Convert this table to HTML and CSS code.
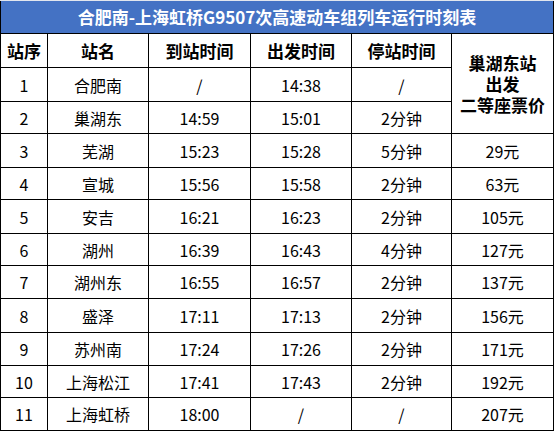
FILE: index.html
```html
<!DOCTYPE html>
<html lang="zh-CN">
<head>
<meta charset="utf-8">
<title>G9507次时刻表</title>
<link rel="stylesheet" href="styles.css">
</head>
<body>
<div class="timetable">
  <div class="cell title">合肥南-上海虹桥G9507次高速动车组列车运行时刻表</div>

  <div class="cell head">站序</div>
  <div class="cell head">站名</div>
  <div class="cell head">到站时间</div>
  <div class="cell head">出发时间</div>
  <div class="cell head">停站时间</div>
  <div class="cell head price-head">巢湖东站<br>出发<br>二等座票价</div>

  <div class="cell">1</div><div class="cell">合肥南</div><div class="cell">/</div><div class="cell">14:38</div><div class="cell">/</div>
  <div class="cell">2</div><div class="cell">巢湖东</div><div class="cell">14:59</div><div class="cell">15:01</div><div class="cell">2分钟</div>
  <div class="cell">3</div><div class="cell">芜湖</div><div class="cell">15:23</div><div class="cell">15:28</div><div class="cell">5分钟</div><div class="cell">29元</div>
  <div class="cell">4</div><div class="cell">宣城</div><div class="cell">15:56</div><div class="cell">15:58</div><div class="cell">2分钟</div><div class="cell">63元</div>
  <div class="cell">5</div><div class="cell">安吉</div><div class="cell">16:21</div><div class="cell">16:23</div><div class="cell">2分钟</div><div class="cell">105元</div>
  <div class="cell">6</div><div class="cell">湖州</div><div class="cell">16:39</div><div class="cell">16:43</div><div class="cell">4分钟</div><div class="cell">127元</div>
  <div class="cell">7</div><div class="cell">湖州东</div><div class="cell">16:55</div><div class="cell">16:57</div><div class="cell">2分钟</div><div class="cell">137元</div>
  <div class="cell">8</div><div class="cell">盛泽</div><div class="cell">17:11</div><div class="cell">17:13</div><div class="cell">2分钟</div><div class="cell">156元</div>
  <div class="cell">9</div><div class="cell">苏州南</div><div class="cell">17:24</div><div class="cell">17:26</div><div class="cell">2分钟</div><div class="cell">171元</div>
  <div class="cell">10</div><div class="cell">上海松江</div><div class="cell">17:41</div><div class="cell">17:43</div><div class="cell">2分钟</div><div class="cell">192元</div>
  <div class="cell">11</div><div class="cell">上海虹桥</div><div class="cell">18:00</div><div class="cell">/</div><div class="cell">/</div><div class="cell">207元</div>
</div>
</body>
</html>
```
FILE: styles.css
```css
html, body {
  margin: 0;
  padding: 0;
  background: #ffffff;
}

.timetable {
  display: grid;
  grid-template-columns: 46px 100px 101px 100px 99px 101px;
  grid-template-rows: 32px 33px 33px 31px 33px 31px 33px 31px 32px 33px 32px 31px 32px;
  gap: 1px;
  width: max-content;
  background: #000;
  border-top: 1px solid #e2e6ee;
  padding: 0 1px 1px 1px;
  font-family: "Noto Sans CJK SC", "Noto Sans", sans-serif;
  color: #000;
}

.cell {
  background: #fff;
  display: flex;
  align-items: center;
  justify-content: center;
  text-align: center;
  font-size: 16px;
  font-weight: 400;
  line-height: 20px;
  white-space: nowrap;
}

.title {
  grid-column: 1 / -1;
  background: #4472c4;
  color: #fff;
  font-size: 17px;
  font-weight: 700;
}

.head {
  font-size: 17px;
  font-weight: 700;
}

.price-head {
  grid-row: span 3;
  line-height: 21px;
}
```
